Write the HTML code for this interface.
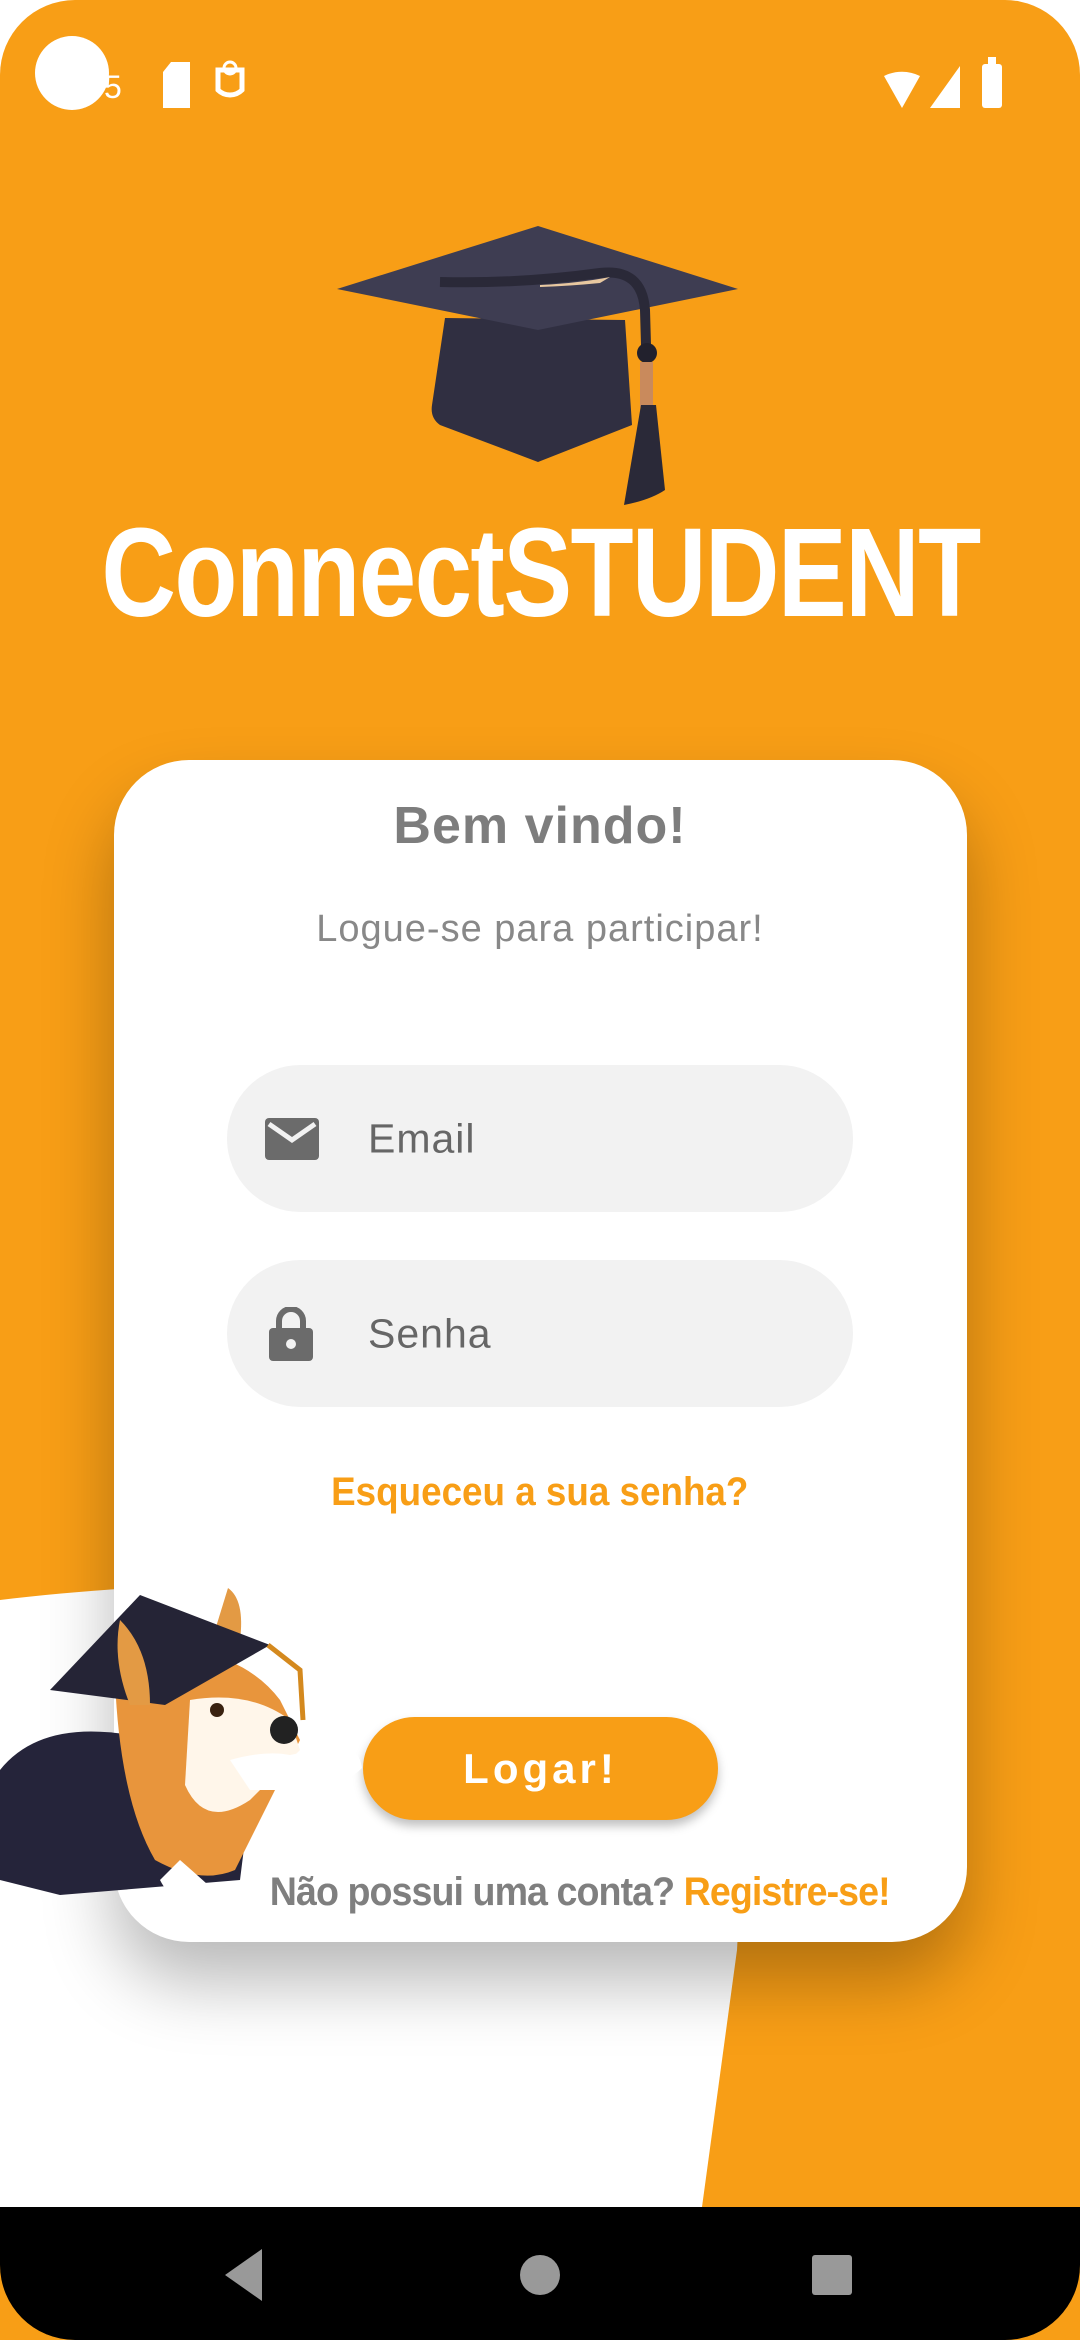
<!DOCTYPE html>
<html><head><meta charset="utf-8"><style>
html,body{margin:0;padding:0;width:1080px;height:2340px;overflow:hidden;background:#fff;font-family:"Liberation Sans",sans-serif}
#screen{position:absolute;left:0;top:0;width:1080px;height:2340px;background:#F89E16;border-radius:75px 75px 0 0;overflow:hidden}
.c{position:absolute;left:0;width:1080px;text-align:center;white-space:nowrap}
.sq{display:inline-block;transform-origin:center}
#card{position:absolute;left:114px;top:760px;width:853px;height:1182px;background:#fff;border-radius:75px;box-shadow:0 40px 70px rgba(0,0,0,0.28)}
.field{position:absolute;left:227px;width:626px;height:147px;background:#F2F2F2;border-radius:74px}
.field span{position:absolute;left:141px;top:50%;transform:translateY(-50%);font-size:41px;color:#666;letter-spacing:1px}
#btn{position:absolute;left:363px;top:1717px;width:355px;height:103px;background:#F89E16;border-radius:52px;box-shadow:0 6px 10px rgba(0,0,0,0.25);color:#fff;font-weight:bold;font-size:42px;letter-spacing:4px;text-align:center;line-height:103px}
#nav{position:absolute;left:0;top:2207px;width:1080px;height:133px;background:#000;border-radius:0 0 75px 75px}
</style></head><body>
<div id="screen">
<svg width="1080" height="2340" style="position:absolute;left:0;top:0">
<path d="M0 1600 C 250 1570, 700 1560, 745 1800 L 737 1950 L 702 2207 L 0 2207 Z" fill="#fff"/>
<!-- status -->
<circle cx="72" cy="73" r="37" fill="#fff"/>
<text x="104" y="98" font-size="32" fill="#fff" font-family="Liberation Sans">5</text>
<path d="M163 72 l8-10 h19 v46 h-27z" fill="#fff"/>
<path d="M218 90 a17 17 0 0 0 24 0 v-20 h-24 z" fill="none" stroke="#fff" stroke-width="5"/>
<circle cx="230" cy="68" r="6" fill="none" stroke="#fff" stroke-width="3"/>
<path d="M884 76 a40 40 0 0 1 36 0 l-18 32z" fill="#fff"/>
<path d="M930 108 l30-42 v42z" fill="#fff"/>
<rect x="982" y="64" width="20" height="44" rx="3" fill="#fff"/><rect x="988" y="57" width="8" height="8" fill="#fff"/>
<!-- cap -->
<path d="M445 318 L432 405 Q430 418 440 425 L538 462 L632 425 L625 320 Z" fill="#302f41"/>
<path d="M337 289 L538 226 L738 289 L538 330 Z" fill="#3e3d52"/>
<path d="M440 282 Q520 284 600 273 Q642 268 645 310 L646 345" fill="none" stroke="#2a2938" stroke-width="10"/>
<path d="M540 285 Q580 283 610 277 L600 283 Q570 286 540 287Z" fill="#e8c8a0"/>
<circle cx="647" cy="353" r="10" fill="#22212d"/>
<rect x="640" y="362" width="13" height="45" fill="#c98a5c"/>
<path d="M641 405 L656 405 L665 490 Q650 500 624 505 Z" fill="#2a2938"/>
</svg>
<div class="c" style="top:500px;font-size:126px;font-weight:bold;color:#fff;letter-spacing:-2px"><span class="sq" style="transform:scaleX(0.82)">ConnectSTUDENT</span></div>
<div id="card"></div>
<div class="c" style="top:796px;font-size:52px;font-weight:bold;color:#7d7d7d;letter-spacing:1px">Bem vindo!</div>
<div class="c" style="top:908px;font-size:38px;color:#888;letter-spacing:1px">Logue-se para participar!</div>
<div class="field" style="top:1065px"><svg style="position:absolute;left:38px;top:53px" width="54" height="42"><rect width="54" height="42" rx="4" fill="#6b6b6b"/><path d="M4 6 L27 22 L50 6" stroke="#F2F2F2" stroke-width="5" fill="none"/></svg><span>Email</span></div>
<div class="field" style="top:1260px"><svg style="position:absolute;left:42px;top:47px" width="44" height="54"><path d="M10 22 v-8 a12 12 0 0 1 24 0 v8" stroke="#6b6b6b" stroke-width="6" fill="none"/><rect x="0" y="21" width="44" height="33" rx="4" fill="#6b6b6b"/><circle cx="22" cy="37" r="5" fill="#F2F2F2"/></svg><span>Senha</span></div>
<div class="c" style="top:1470px;font-size:40px;font-weight:bold;color:#F89E16"><span class="sq" style="transform:scaleX(0.92)">Esqueceu a sua senha?</span></div>
<div id="btn">Logar!</div>
<div class="c" style="top:1870px;left:40px;font-size:40px;font-weight:bold;color:#7f7f7f;letter-spacing:-1px"><span class="sq" style="transform:scaleX(0.94)">Não possui uma conta? <span style="color:#F89E16">Registre-se!</span></span></div>
<svg width="400" height="400" viewBox="0 1550 400 400" style="position:absolute;left:0;top:1550px">
<path d="M0 1770 Q40 1720 130 1735 L250 1800 L240 1880 L60 1895 L0 1880 Z" fill="#25243a"/>
<path d="M115 1680 Q125 1640 190 1650 Q250 1660 280 1700 L300 1740 L260 1820 L235 1870 Q200 1885 155 1860 Q120 1800 115 1680Z" fill="#e8953c"/>
<path d="M190 1700 Q250 1690 290 1720 L300 1750 L250 1800 Q205 1830 185 1785 Z" fill="#fff6ea"/>
<path d="M228 1588 Q245 1600 240 1640 L212 1640 Z" fill="#e39a44"/>
<path d="M50 1690 L140 1595 L270 1645 L165 1705 Z" fill="#252436"/>
<path d="M120 1620 Q150 1650 150 1705 L130 1705 Q112 1660 120 1620Z" fill="#e39a44"/>
<path d="M268 1645 L300 1670 L303 1720" stroke="#d4891e" stroke-width="5" fill="none"/>
<circle cx="284" cy="1730" r="14" fill="#222"/>
<circle cx="217" cy="1710" r="7" fill="#3a2210"/>
<path d="M230 1760 Q265 1750 290 1755 L340 1745 Q360 1750 362 1768 Q345 1785 310 1790 L250 1790Z" fill="#fff"/>
<path d="M180 1860 Q220 1895 240 1915 L200 1920 Q170 1900 160 1880Z" fill="#fff"/>
</svg>
<div id="nav"><svg width="1080" height="133"><path d="M225 68 L262 42 V94 Z" fill="#999"/><circle cx="540" cy="68" r="20" fill="#999"/><rect x="812" y="48" width="40" height="40" rx="3" fill="#999"/></svg></div>
</div>
</body></html>
